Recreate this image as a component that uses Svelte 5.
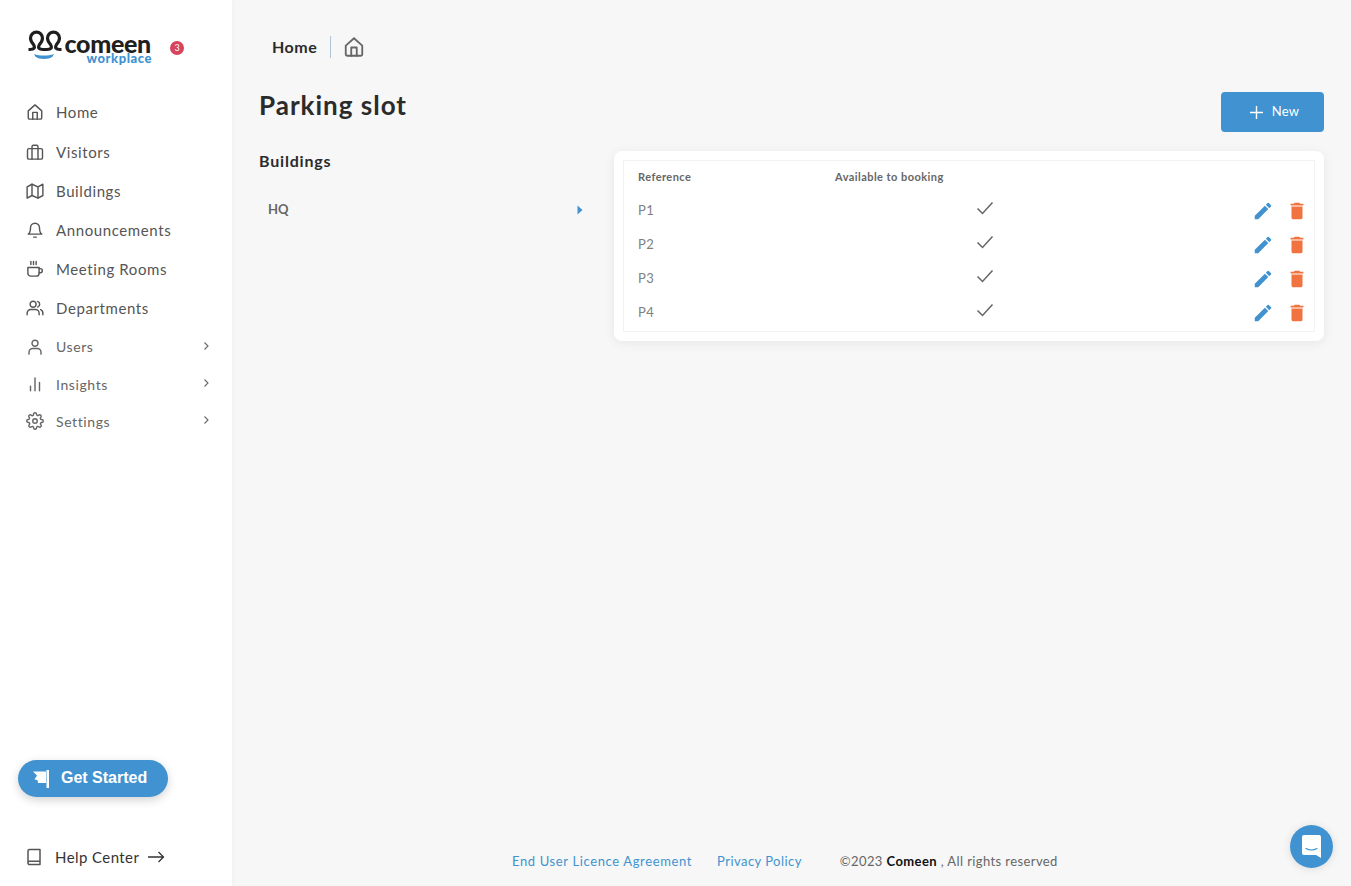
<script>
  const navItems = [
    { label: "Home", icon: "home" },
    { label: "Visitors", icon: "case" },
    { label: "Buildings", icon: "map" },
    { label: "Announcements", icon: "bell" },
    { label: "Meeting Rooms", icon: "cup" },
    { label: "Departments", icon: "people" },
    { label: "Users", icon: "user", sub: true },
    { label: "Insights", icon: "bars", sub: true },
    { label: "Settings", icon: "gear", sub: true },
  ];
  const slots = ["P1", "P2", "P3", "P4"];
</script>

{#snippet navIcon(name)}
  <svg class="nav-icon" viewBox="0 0 24 24" fill="none" stroke="currentColor" stroke-width="1.9" stroke-linecap="round" stroke-linejoin="round">
    {#if name === "home"}
      <path d="M3 10.500 12 2.500l9 8V19.500a2 2 0 0 1-2 2H5a2 2 0 0 1-2-2z" /><path d="M9 21.500v-9h6v9" />
    {:else if name === "case"}
      <rect x="2" y="7.500" width="20" height="14" rx="2" /><path d="M8 21.500V5a2 2 0 0 1 2-2h4a2 2 0 0 1 2 2v16.500" />
    {:else if name === "map"}
      <path d="M1.500 6.500 8 3l8 3.500L22.500 3v15L16 21.500 8 18l-6.500 3.500z" /><path d="M8 3v15M16 6.500v15" />
    {:else if name === "bell"}
      <path d="M18 9a6 6 0 0 0-12 0c0 6.500-3 8.500-3 8.500h18S18 15.500 18 9" /><path d="M10.300 21.500h3.400" />
    {:else if name === "cup"}
      <path d="M2.500 10h15v7.500a4 4 0 0 1-4 4h-7a4 4 0 0 1-4-4z" /><path d="M17.500 11.500h1.500a2.750 2.750 0 0 1 0 5.500h-1.500" /><path d="M6.500 2v4M10 2v4M13.500 2v4" />
    {:else if name === "people"}
      <circle cx="9.500" cy="7" r="4" /><path d="M1.500 21v-2a5 5 0 0 1 5-5h6a5 5 0 0 1 5 5v2" /><path d="M15.500 3.200a4 4 0 0 1 0 7.600M19.500 14.200a5 5 0 0 1 3 4.800v2" />
    {:else if name === "user"}
      <circle cx="12" cy="7" r="4" /><path d="M4 21.500V19a5 5 0 0 1 5-5h6a5 5 0 0 1 5 5v2.500" />
    {:else if name === "bars"}
      <path d="M6 21v-6M12 21V4M18 21V10" />
    {:else}
      <circle cx="12" cy="12" r="3" /><path d="M19.400 15a1.650 1.650 0 0 0 .33 1.820l.06.06a2 2 0 1 1-2.830 2.830l-.06-.06a1.650 1.650 0 0 0-2.820 1.170V21a2 2 0 0 1-4 0v-.09A1.650 1.650 0 0 0 7.260 19.700l-.06.06a2 2 0 1 1-2.830-2.830l.06-.06A1.650 1.650 0 0 0 3.250 14H3a2 2 0 0 1 0-4h.09A1.650 1.650 0 0 0 4.300 7.260l-.06-.06a2 2 0 1 1 2.830-2.830l.06.06A1.650 1.650 0 0 0 10 3.250V3a2 2 0 0 1 4 0v.09a1.650 1.650 0 0 0 2.820 1.170l.06-.06a2 2 0 1 1 2.830 2.830l-.06.06A1.650 1.650 0 0 0 20.750 10H21a2 2 0 0 1 0 4h-.09a1.650 1.650 0 0 0-1.510 1" />
    {/if}
  </svg>
{/snippet}

<div class="page">
  <aside class="sidebar">
    <div class="brand">
      <svg class="mark" viewBox="0 0 34 30" fill="none">
        <path d="M0.500 19.500h1.500c4 0 5.500-1.500 3.500-5C3.500 12 2.500 10.500 2.500 8.200a6 6 0 0 1 12 0c0 2.300-1 3.800-3 6.300-2 3.500-.5 5 3.500 5h4c4 0 5.500-1.500 3.500-5-2-2.500-3-4-3-6.300a6 6 0 0 1 12 0c0 2.300-1 3.800-3 6.300-2 3.500-.5 5 3.500 5h1.500" stroke="#1f1f1f" stroke-width="3.200" stroke-linejoin="round" />
        <path d="M6 24c6 2 14 2 20 0l-1.500 2.800c-2.500 1.700-4.500 2.200-8.500 2.200s-6-.5-8.500-2.200z" fill="#4093d0" />
      </svg>
      <div class="wordmark">
        <span class="comeen">comeen</span>
        <span class="workplace">workplace</span>
      </div>
      <span class="badge">3</span>
    </div>

    <nav>
      {#each navItems as item}
        <a class="nav-item" class:sub={item.sub} href="#top">
          {@render navIcon(item.icon)}
          <span class="nav-label">{item.label}</span>
          {#if item.sub}
            <svg class="chev" viewBox="0 0 8 10" fill="none" stroke="currentColor" stroke-width="1.100"><path d="M2.500 1.500 6 5 2.500 8.500" /></svg>
          {/if}
        </a>
      {/each}
    </nav>

    <div class="side-bottom">
      <button class="started" type="button">
        <svg viewBox="0 0 16 18" width="16" height="18" fill="#fff">
          <path d="M0 1.500H13V13H5L4.500 10 1.500 9.500 4 5.500z" /><rect x="13.500" y="0" width="2.500" height="18" />
        </svg>
        <span>Get Started</span>
      </button>
      <a class="help" href="#top">
        <svg class="book" viewBox="0 0 24 24" fill="none" stroke="currentColor" stroke-width="2" stroke-linejoin="round">
          <path d="M4 19.500V4a2 2 0 0 1 2-2h14v20H6a2 2 0 0 1-2-2.500 2 2 0 0 1 2-2h14" />
        </svg>
        <span>Help Center</span>
        <svg class="arrow" viewBox="0 0 18 12" fill="none" stroke="currentColor" stroke-width="1.300"><path d="M1 6h15.500M11.500 1l5 5-5 5" /></svg>
      </a>
    </div>
  </aside>

  <main>
    <div class="crumbs">
      <span class="crumb">Home</span>
      <svg class="crumb-home" viewBox="0 0 24 24" fill="none" stroke="currentColor" stroke-width="2" stroke-linecap="round" stroke-linejoin="round">
        <path d="M3 10.500 12 2.500l9 8V19.500a2 2 0 0 1-2 2H5a2 2 0 0 1-2-2z" /><path d="M9 21.500v-9h6v9" />
      </svg>
    </div>

    <div class="head">
      <h1>Parking slot</h1>
      <button class="new" type="button">
        <svg viewBox="0 0 13 13" width="13" height="13" stroke="#fff" stroke-width="1.400"><path d="M6.500 0v13M0 6.500h13" /></svg>
        <span>New</span>
      </button>
    </div>

    <div class="content">
      <section class="buildings">
        <h2>Buildings</h2>
        <div class="building">
          <span>HQ</span>
          <svg viewBox="0 0 6 10" width="6" height="10" fill="#4093d0"><path d="M0.500 0.500 5.500 5 0.500 9.500z" /></svg>
        </div>
      </section>

      <section class="card">
        <div class="table-wrap">
          <table>
            <thead>
              <tr>
                <th class="col-ref">Reference</th>
                <th class="col-avail">Available to booking</th>
                <th></th>
              </tr>
            </thead>
            <tbody>
              {#each slots as slot}
                <tr>
                  <td class="ref">{slot}</td>
                  <td class="check">
                    <svg viewBox="0 0 18 14" width="18" height="14" fill="none" stroke="#666" stroke-width="1.500"><path d="M1.500 7.500 6.500 12.500 16.500 1.500" /></svg>
                  </td>
                  <td class="actions">
                    <svg viewBox="0 0 24 24" width="22" height="22" fill="#4093d0"><path d="M3 17.250V21h3.750L17.810 9.940l-3.750-3.750zM20.710 7.040a1 1 0 0 0 0-1.410l-2.340-2.340a1 1 0 0 0-1.410 0l-1.830 1.830 3.750 3.750z" /></svg>
                    <svg viewBox="0 0 24 24" width="22" height="22" fill="#f1733f"><path d="M6 19a2 2 0 0 0 2 2h8a2 2 0 0 0 2-2V7H6zM19 4h-3.500l-1-1h-5l-1 1H5v2h14z" /></svg>
                  </td>
                </tr>
              {/each}
            </tbody>
          </table>
        </div>
      </section>
    </div>

    <footer>
      <a class="eula" href="#top">End User Licence Agreement</a>
      <a href="#top">Privacy Policy</a>
      <span class="copy">©2023 <b>Comeen</b> , All rights reserved</span>
    </footer>
  </main>

  <button class="chat" type="button" aria-label="Chat">
    <svg viewBox="0 0 19 23" width="19" height="23">
      <path d="M2 0h15a2 2 0 0 1 2 2v21l-5-3H2a2 2 0 0 1-2-2V2a2 2 0 0 1 2-2z" fill="#fff" />
      <path d="M4 13.500c3.200 1.800 7.800 1.800 11 0" fill="none" stroke="#4093d0" stroke-width="1.100" stroke-linecap="round" />
    </svg>
  </button>
</div>

<style>
  :global(body) {
    margin: 0;
    font-family: Lato, "Open Sans", sans-serif;
    background: #f7f7f7;
    color: #222;
  }

  a {
    text-decoration: none;
    color: inherit;
  }

  .page {
    display: flex;
    height: 100vh;
    overflow: hidden;
  }

  .sidebar {
    width: 232px;
    flex: none;
    display: flex;
    flex-direction: column;
    background: #fff;
    box-shadow: 0 0 6px rgba(0, 0, 0, 0.04);
    box-sizing: border-box;
  }

  .brand {
    height: 92.800px;
    flex: none;
    display: flex;
    align-items: flex-start;
    padding: 30px 0 0 28px;
    box-sizing: border-box;
  }

  .mark {
    width: 34px;
    height: 30px;
    flex: none;
  }

  .wordmark {
    display: flex;
    flex-direction: column;
    align-items: flex-end;
    margin-left: 3px;
    padding-top: 3px;
    width: 86px;
  }

  .comeen {
    font-size: 25px;
    font-weight: 900;
    line-height: 20px;
    letter-spacing: -0.3px;
    color: #1f1f1f;
  }

  .workplace {
    font-size: 13px;
    font-weight: 900;
    line-height: 8px;
    letter-spacing: 0.55px;
    margin: 1px -1px 0 0;
    color: #4093d0;
  }

  .badge {
    width: 14px;
    height: 14px;
    margin: 11px 0 0 19px;
    border-radius: 50%;
    background: #d5455b;
    color: #fff;
    font-size: 9px;
    line-height: 14px;
    text-align: center;
  }

  nav {
    display: flex;
    flex-direction: column;
  }

  .nav-item {
    display: flex;
    align-items: center;
    height: 39.200px;
    padding: 0 22px 0 26px;
    color: #555;
    font-size: 15px;
    letter-spacing: 0.6px;
  }

  .nav-item.sub {
    height: 37.400px;
    font-size: 14px;
    color: #666;
  }

  .nav-icon {
    width: 18px;
    height: 18px;
    flex: none;
    margin-right: 12px;
  }

  .nav-label {
    flex: 1;
  }

  .chev {
    width: 8px;
    height: 10px;
    margin-top: -2px;
  }

  .side-bottom {
    margin-top: auto;
    display: flex;
    flex-direction: column;
    padding-bottom: 18px;
  }

  .started {
    display: flex;
    align-items: center;
    gap: 12px;
    width: 150px;
    height: 37px;
    margin-left: 18px;
    padding: 0 0 0 15px;
    border: none;
    border-radius: 19px;
    background: #4093d0;
    color: #fff;
    font-family: "Liberation Sans", sans-serif;
    font-size: 16px;
    font-weight: 700;
    box-shadow: 0 3px 10px rgba(0, 0, 0, 0.18);
  }

  .started span {
    margin-bottom: 2px;
  }

  .help {
    display: flex;
    align-items: center;
    margin: 49px 0 0 25px;
    height: 22px;
    color: #333;
    font-size: 15px;
    letter-spacing: 0.42px;
  }

  .book {
    width: 18px;
    height: 18px;
    margin-right: 12px;
    color: #555;
  }

  .arrow {
    width: 18px;
    height: 12px;
    margin-left: 8px;
  }

  main {
    flex: 1;
    min-width: 0;
    display: flex;
    flex-direction: column;
    padding: 0 27px;
  }

  .crumbs {
    display: flex;
    align-items: center;
    height: 22px;
    margin: 36px 0 0 13px;
  }

  .crumb {
    font-size: 16px;
    font-weight: 700;
    letter-spacing: 0.5px;
    padding-right: 13px;
    border-right: 1px solid #b4c3d3;
    line-height: 22px;
    color: #2b2b2b;
  }

  .crumb-home {
    width: 22px;
    height: 22px;
    margin-left: 12px;
    color: #666;
  }

  .head {
    display: flex;
    justify-content: space-between;
    align-items: flex-start;
    margin-top: 34px;
  }

  h1 {
    margin: 0;
    font-size: 26px;
    font-weight: 700;
    line-height: 27px;
    letter-spacing: 1px;
    color: #2b2b2b;
  }

  .new {
    width: 103px;
    height: 40px;
    display: flex;
    align-items: center;
    justify-content: center;
    gap: 9px;
    padding: 0 0 0 4px;
    border: none;
    border-radius: 4px;
    background: #4093d0;
    color: #fff;
    font-family: inherit;
    font-size: 13px;
    letter-spacing: 0.3px;
  }

  .new span {
    margin-bottom: 2px;
  }

  .content {
    display: flex;
    flex: 1;
    gap: 24px;
    margin-top: 19px;
  }

  .buildings {
    width: 331px;
    flex: none;
  }

  h2 {
    margin: 0;
    font-size: 16px;
    font-weight: 700;
    line-height: 20px;
    letter-spacing: 0.8px;
    color: #2b2b2b;
  }

  .building {
    display: flex;
    justify-content: space-between;
    align-items: center;
    margin-top: 28px;
    padding: 0 7px 0 9px;
    height: 20px;
    font-size: 13px;
    font-weight: 700;
    color: #666;
  }

  .building svg {
    margin-top: 2px;
  }

  .card {
    flex: 1;
    align-self: flex-start;
    padding: 9px;
    background: #fff;
    border-radius: 8px;
    box-shadow: 0 2px 12px rgba(0, 0, 0, 0.07);
  }

  .table-wrap {
    padding-bottom: 1px;
    border: 1px solid #f2f2f2;
  }

  table {
    width: calc(100% + 2px);
    margin: -1px -1px 0;
    border-collapse: collapse;
    table-layout: fixed;
  }

  th,
  td {
    box-sizing: border-box;
    height: 34px;
    padding: 0 14px;
  }

  th {
    padding-bottom: 2px;
    text-align: left;
    font-size: 11px;
    font-weight: 700;
    letter-spacing: 0.45px;
    color: #666;
  }

  .col-ref {
    width: 198px;
    padding-left: 15px;
  }

  .col-avail {
    width: 328px;
  }

  td {
    font-size: 13px;
    letter-spacing: 0.4px;
    color: #808080;
  }

  .ref {
    padding: 0 14px 2px 15px;
  }

  .check {
    text-align: center;
    line-height: 0;
  }

  .check svg {
    margin-top: -6px;
  }

  .actions {
    padding: 0 7px 0 0;
    text-align: right;
    line-height: 0;
  }

  .actions svg + svg {
    margin-left: 8px;
  }

  footer {
    display: flex;
    align-items: center;
    height: 50px;
    flex: none;
    padding-left: 253px;
    font-size: 13px;
    letter-spacing: 0.45px;
    color: #4093d0;
  }

  footer a {
    margin-right: 25px;
  }

  footer .eula {
    letter-spacing: 0.63px;
  }

  .copy {
    margin-left: 13px;
    letter-spacing: 0.4px;
    color: #666;
  }

  .copy b {
    color: #111;
  }

  .chat {
    position: fixed;
    right: 18px;
    bottom: 18px;
    width: 43px;
    height: 43px;
    padding: 0;
    display: flex;
    align-items: center;
    justify-content: center;
    border: none;
    border-radius: 50%;
    background: #4093d0;
    box-shadow: 0 1px 8px rgba(0, 0, 0, 0.12);
  }
</style>
